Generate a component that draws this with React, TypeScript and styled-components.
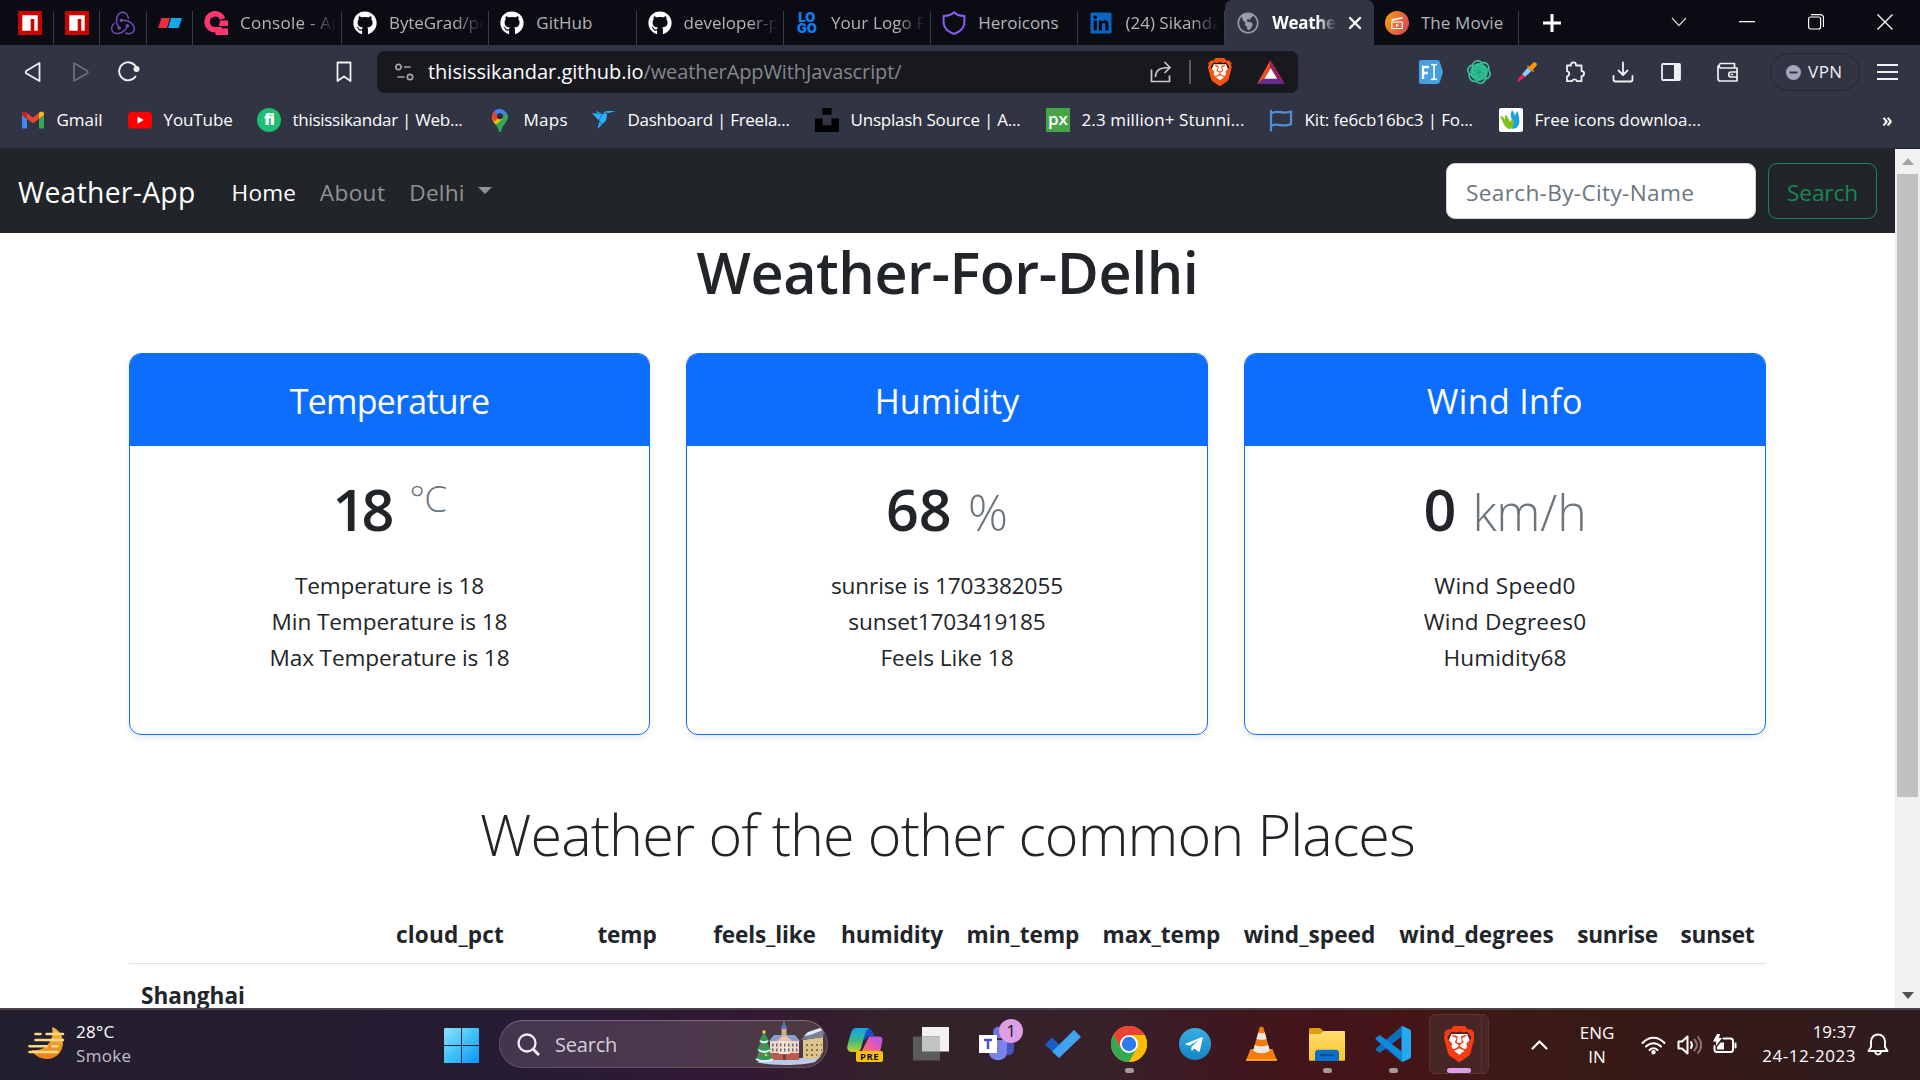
import React from "react";
import styled, { createGlobalStyle } from "styled-components";
import { FaGithub, FaLinkedin } from "react-icons/fa";
import { SiRedux, SiBrave, SiOpenai, SiFreelancer, SiUnsplash } from "react-icons/si";
import { HiGlobeAmericas } from "react-icons/hi2";

const Global = createGlobalStyle`
  *, *::before, *::after { box-sizing: border-box; }
  html, body { margin: 0; padding: 0; background: #fff; }
  body {
    width: 1920px; height: 1080px; overflow: hidden;
    font-family: "Open Sans", "Noto Sans", sans-serif;
    color: #212529;
  }
  svg { display: block; flex: none; }
`;

const T = styled.span<{ $s: number; $ls?: number; $wt?: number; $c?: string }>`
  display: inline-block;
  white-space: nowrap;
  font-size: ${(p) => p.$s}px;
  letter-spacing: ${(p) => p.$ls ?? 0}px;
  font-weight: ${(p) => p.$wt ?? 400};
  ${(p) => (p.$c ? `color: ${p.$c};` : "")}
`;

const Screen = styled.div`
  display: flex;
  flex-direction: column;
  width: 1920px;
  height: 1080px;
`;

/* ---------- tab strip ---------- */
const TabStrip = styled.div`
  display: flex;
  height: 45px;
  background: #0b0b14;
  padding-left: 7px;
`;
const PinnedTab = styled.div`
  flex: none;
  width: 46.5px;
  height: 45px;
  padding: 11px 0 0 11px;
  background: linear-gradient(#3b3b3e, #3b3b3e) right 11px / 1px 34px no-repeat;
`;
const Tab = styled.div<{ $active?: boolean; $w?: number }>`
  display: flex;
  flex: none;
  align-items: center;
  width: ${(p) => p.$w ?? 147.3}px;
  height: 45px;
  padding: 1px 6px 0 11px;
  gap: 12px;
  color: #b4b4b8;
  ${(p) =>
    p.$active
      ? "background: #313442; border-radius: 7px 7px 0 0; color: #fff; padding-right: 12px;"
      : "background: linear-gradient(#3b3b3e, #3b3b3e) right 11px / 1px 34px no-repeat;"}
`;
const Favicon = styled.div`
  display: flex;
  align-items: center;
  justify-content: center;
  width: 24px;
  height: 24px;
  flex: none;
`;
const TabTitle = styled.div<{ $fade?: boolean }>`
  flex: 1;
  min-width: 0;
  overflow: hidden;
  line-height: 26px;
  ${(p) => p.$fade && "mask-image: linear-gradient(90deg, #000 70%, transparent 100%);"}
`;
const WindowButtons = styled.div`
  display: flex;
  align-items: center;
  height: 43px;
`;
const LogoWord = styled.div`
  display: flex;
  flex-direction: column;
  align-items: center;
  font: 900 13px/11px "Inter", sans-serif;
  color: #0d7ff2;
`;

/* ---------- toolbar ---------- */
const Toolbar = styled.div`
  display: flex;
  align-items: center;
  height: 54px;
  background: #313442;
  color: #f0f0f2;
`;
const Slot = styled.div<{ $w: number; $ml?: number }>`
  display: flex;
  align-items: center;
  justify-content: center;
  width: ${(p) => p.$w}px;
  margin-left: ${(p) => p.$ml ?? 0}px;
  flex: none;
`;
const AddressBar = styled.div`
  display: flex;
  align-items: center;
  width: 921px;
  height: 42px;
  margin-left: 25px;
  border-radius: 7px;
  background: #17191f;
`;
const Url = styled.div`
  flex: 1;
  margin-left: 14px;
  line-height: 40px;
  color: #fff;
  white-space: nowrap;
`;
const Divider = styled.div`
  width: 2px;
  height: 24px;
  margin-left: 17px;
  background: #5b5d64;
`;
const Vpn = styled.div`
  display: flex;
  align-items: center;
  width: 90px;
  height: 38px;
  margin-left: 32px;
  padding-left: 15px;
  gap: 7px;
  border: 1.5px solid #232530;
  border-radius: 19px;
  line-height: 24px;
`;

/* ---------- bookmarks ---------- */
const Bookmarks = styled.div`
  display: grid;
  grid-template-columns: 107px 129px 231px 104px 223px 231px 223px 230px 383px auto;
  height: 50px;
  padding: 9px 0 0 21px;
  background: #313442;
  border-bottom: 1px solid #24262c;
  color: #fff;
`;
const Bookmark = styled.div`
  display: flex;
  align-items: center;
  height: 24px;
  gap: 11.5px;
  line-height: 24px;
`;
const FiBadge = styled.div`
  width: 24px;
  height: 24px;
  border-radius: 50%;
  background: #1dbf73;
  color: #fff;
  font: 800 16px/23px "Open Sans", sans-serif;
  text-align: center;
  letter-spacing: -1px;
`;
const PxBadge = styled.div`
  width: 24px;
  height: 24px;
  background: #47a447;
  color: #fff;
  font: 600 17px/21px "Open Sans", sans-serif;
  text-align: center;
`;

/* ---------- page ---------- */
const Viewport = styled.div`
  display: flex;
  height: 859px;
`;
const Page = styled.div`
  width: 1895px;
  height: 859px;
  overflow: hidden;
  background: #fff;
`;
const Scrollbar = styled.div`
  display: flex;
  flex-direction: column;
  align-items: center;
  width: 25px;
  height: 859px;
  background: #f1f1f1;
`;
const ScrollArrow = styled.div`
  display: flex;
  align-items: center;
  justify-content: center;
  width: 25px;
  height: 25px;
`;
const Thumb = styled.div`
  width: 21px;
  height: 623px;
  margin-bottom: auto;
  background: #c1c1c1;
`;
const Navbar = styled.nav`
  display: flex;
  align-items: center;
  height: 84px;
  padding: 0 18px;
  background: #212529;
  color: #fff;
`;
const NavLinks = styled.div`
  display: flex;
  align-items: center;
  padding-top: 2px;
`;
const NavLink = styled.a<{ $on?: boolean; $ml: number }>`
  display: flex;
  align-items: center;
  margin-left: ${(p) => p.$ml}px;
  color: ${(p) => (p.$on ? "#fff" : "#909294")};
`;
const Caret = styled.i`
  margin: -3px 0 0 13px;
  border: 7px solid transparent;
  border-top-color: currentColor;
  border-bottom: 0;
`;
const SearchField = styled.div`
  display: flex;
  align-items: center;
  width: 310px;
  height: 56px;
  margin-left: auto;
  padding: 2px 0 0 19px;
  border: 1px solid #ced4da;
  border-radius: 9px;
  background: #fff;
  color: #6c757d;
`;
const SearchButton = styled.div`
  display: flex;
  align-items: center;
  justify-content: center;
  width: 109px;
  height: 56px;
  margin-left: 12px;
  padding-top: 2px;
  border: 1px solid #198754;
  border-radius: 9px;
  color: #198754;
`;
const Heading = styled.h1`
  margin: 0;
  height: 120px;
  text-align: center;
  line-height: 78px;
  font-weight: 600;
`;
const Cards = styled.div`
  display: grid;
  grid-template-columns: 521px 522px 522px;
  gap: 36px;
  padding-left: 129px;
`;
const Card = styled.section`
  height: 382px;
  border: 1px solid #0d6efd;
  border-radius: 12px;
  box-shadow: 0 3px 6px rgba(0, 0, 0, 0.08);
  overflow: hidden;
  text-align: center;
`;
const CardHead = styled.header`
  height: 92px;
  line-height: 95px;
  background: #0d6efd;
  color: #fff;
`;
const Reading = styled.div`
  display: flex;
  justify-content: center;
  align-items: baseline;
  gap: 16px;
  height: 122px;
  padding-top: 25px;
  line-height: 76px;
`;
const Sup = styled.span`
  align-self: flex-start;
  margin-left: 3px;
  line-height: 53px;
  color: #6c757d;
`;
const Lines = styled.div`
  display: flex;
  flex-direction: column;
  align-items: center;
  line-height: 36px;
`;
const SubHeading = styled.h2`
  margin: 0;
  height: 165px;
  padding-top: 60px;
  text-align: center;
  line-height: 78px;
  font-weight: 300;
`;
const Table = styled.div`
  display: grid;
  grid-template-columns: 217px 208px 146px 129px 126px 136px 141px 155px 179px 103px 97px;
  width: 1638px;
  margin-left: 129px;
`;
const Th = styled.div`
  height: 64px;
  text-align: center;
  line-height: 70px;
  border-bottom: 1px solid #dee2e6;
`;
const RowHead = styled.div`
  height: 64px;
  padding-left: 12px;
  line-height: 63px;
`;

/* ---------- taskbar ---------- */
const Taskbar = styled.footer`
  display: flex;
  height: 72px;
  border-top: 2px solid #4a434c;
  background: linear-gradient(90deg, #241f2f 0%, #241d31 20%, #281b36 29%, #331833 39%, #33222a 46%, #34222a 52%, #38202a 58%, #40161d 65%, #451417 73%, #3b1a16 79%, #381917 86%, #2e1c1f 100%);
  color: #fff;
`;
const WeatherWidget = styled.div`
  display: flex;
  width: 444px;
  padding: 10px 0 0 28px;
  gap: 10px;
`;
const MoonBox = styled.div`
  padding-top: 5px;
`;
const Stack = styled.div<{ $align?: string }>`
  display: flex;
  flex-direction: column;
  align-items: ${(p) => p.$align ?? "flex-start"};
  line-height: 24px;
`;
const SearchPill = styled.div`
  display: flex;
  align-items: center;
  width: 329px;
  height: 48px;
  margin: 10px 4px 0 20px;
  padding-left: 17px;
  border: 1.5px solid rgba(255, 255, 255, 0.14);
  border-top-color: rgba(255, 255, 255, 0.26);
  border-radius: 24px;
  background: linear-gradient(90deg, #44354f, #4d384d 60%, #4b3a40);
  overflow: hidden;
`;
const PillText = styled.div`
  flex: 1;
  margin: 2px 0 0 15px;
  line-height: 40px;
  color: #d6cfd8;
`;
const AppSlot = styled.div`
  position: relative;
  display: flex;
  justify-content: center;
  width: 66px;
  height: 70px;
  padding-top: 16px;
`;
const Badge = styled.div`
  position: absolute;
  left: 35px;
  top: 9px;
  width: 24px;
  height: 24px;
  border-radius: 50%;
  background: #dc9fe3;
  color: #1b1020;
  font-size: 17px;
  line-height: 24px;
  text-align: center;
`;
const PreTag = styled.div`
  position: absolute;
  left: 24px;
  top: 41px;
  width: 27px;
  height: 11px;
  border-radius: 2px;
  background: #fbc00c;
  color: #111;
  font: 700 9.5px/11px "Open Sans", sans-serif;
  letter-spacing: 0.4px;
  text-align: center;
`;
const Running = styled.i<{ $active?: boolean }>`
  position: absolute;
  bottom: 7px;
  width: ${(p) => (p.$active ? 24 : 9)}px;
  height: 5px;
  border-radius: 3px;
  background: ${(p) => (p.$active ? "#dc9fe8" : "#a89a9c")};
`;
const Tile = styled.i<{ $x: number }>`
  position: absolute;
  left: ${(p) => p.$x}px;
  top: 4px;
  width: 53px;
  height: 60px;
  border-radius: 6px;
  background: #482625;
  border: 1px solid #583634;
`;
const BraveMark = styled.div`
  position: relative;
`;
const Tray = styled.div`
  display: grid;
  grid-template-columns: 50px 66px 46px 26px 46px 108px 44px;
  margin-left: 22px;
  height: 70px;
  justify-items: center;
  align-items: center;
`;
const TrayText = styled(Stack)`
  padding-bottom: 1px;
`;
const Clock = styled(Stack)`
  justify-self: end;
  padding-bottom: 3px;
`;

/* ---------- icons ---------- */
const Npm = () => (
  <svg width="24" height="24" viewBox="0 0 24 24">
    <path fill="#cc0200" d="M0 0h24v24H0z" />
    <path fill="#fff" d="M4.3 4.3h15.4v15.4h-3.4V8h-3.6v11.7H4.3z" />
  </svg>
);
const TwoFlags = () => (
  <svg width="24" height="24" viewBox="0 0 24 24">
    <path fill="#ef2c40" d="M3.5 7H12l-3 10H0z" />
    <path fill="#10a8ea" d="M13 7h11l-3.3 10H10z" />
  </svg>
);
const Appwrite = () => (
  <svg width="24" height="24" viewBox="0 0 24 24">
    <path fill="none" stroke="#fd366e" strokeWidth="5.6" d="M14 18.8H11A8 8 0 1 1 18.6 8" />
    <path fill="#fd366e" d="M16 9.500H24v5.500h-9zM11.500 17.500H24V24H11.500zM14 16h4v3h-4z" />
  </svg>
);
const Shield = () => (
  <svg width="24" height="24" viewBox="0 0 24 24" fill="none" stroke="#8b5cf6" strokeWidth="2" strokeLinejoin="round">
    <path d="M12 1.300C9.300 4 5.500 5 1.600 4.900v6.400c0 5 4.200 9.400 10.400 11.600 6.200-2.200 10.400-6.600 10.400-11.600V4.900C18.500 5 14.700 4 12 1.300z" />
  </svg>
);
const Movie = () => (
  <svg width="24" height="24" viewBox="0 0 24 24">
    <defs>
      <linearGradient id="mv" x1="0" y1="0.3" x2="1" y2="0.7">
        <stop offset="0" stopColor="#f59b0b" />
        <stop offset="1" stopColor="#e0405a" />
      </linearGradient>
    </defs>
    <circle cx="12" cy="12" r="12" fill="url(#mv)" />
    <path d="M6.800 11h10.400v6.500H6.800z" fill="none" stroke="#fff" strokeWidth="1.200" />
    <path d="M6.300 8.300 17.300 6l.5 1.500-11 2.500z" fill="#fff" />
    <path d="m11 12.600 3 1.700-3 1.700z" fill="#fff" />
  </svg>
);
const Gmail = () => (
  <svg width="24" height="24" viewBox="0 0 24 24">
    <path fill="#4285f4" d="M1 20V7l5 3.800V20.500H2z" />
    <path fill="#34a853" d="M23 20V7l-5 3.800v9.700h4z" />
    <path fill="#ea4335" d="M6 5v5.800l6 4.500 6-4.500V5l-6 4.500z" />
    <path fill="#c5221f" d="M1 7V5.800C1 3.400 3.600 2.800 5 4l1 .8v6z" />
    <path fill="#fbbc04" d="M23 7V5.800C23 3.400 20.400 2.800 19 4l-1 .8v6z" />
  </svg>
);
const YouTube = () => (
  <svg width="24" height="24" viewBox="0 0 24 24">
    <rect x="0" y="3.800" width="24" height="16.600" rx="4" fill="#f00" />
    <path d="m9.500 8.500 6.300 3.600-6.300 3.600z" fill="#fff" />
  </svg>
);
const MapsPin = () => (
  <svg width="24" height="24" viewBox="0 0 24 24">
    <path fill="#34a853" d="M20 8.500c0 6-5.500 7.500-7 15-.3 1-1.700 1-2 0-.8-3.500-2-5-3.300-6.700L17.900 4.500c1.300 1 2.100 2.500 2.100 4z" />
    <path fill="#fbbc04" d="M7.700 16.800C6 14.500 4 12.500 4 8.500l6-2 5 4z" />
    <path fill="#ea4335" d="M4 8.500c0-2 .7-3.800 1.900-5.300L12 7.500 7 13.500C5 12 4 10.500 4 8.500z" />
    <path fill="#4285f4" d="M5.900 3.200A8 8 0 0 1 18.400 5L12.500 11z" />
    <circle cx="12" cy="8.300" r="3" fill="#2b2b3a" />
  </svg>
);
const FlagOutline = () => (
  <svg width="24" height="24" viewBox="0 0 24 24" fill="none" stroke="#538dd7" strokeWidth="2.300" strokeLinejoin="round" strokeLinecap="round">
    <path d="M2 3v19.500M2 5.500c8-4.500 10 1.500 20-2v12.800c-9 3.500-12-2-20 1.500" />
  </svg>
);
const Leaf = () => (
  <svg width="24" height="24" viewBox="0 0 24 24">
    <rect width="24" height="24" rx="2" fill="#fff" />
    <path fill="#17a2e8" d="M13 2c2 3 3 4 3 7 0-2 1-4 2.500-6 .5 3 2 5 1.500 8 1 3 0 7-3 9-2 1-4 1-5 0 3-4 1-8 0-11-.5-2 0-5 1-7z" />
    <path fill="#7fc31c" d="M1 8c3 0 4 2 5 4 0-2-1-4 1-5 2 2 3 5 4 7 1-1 1-3 3-3 2 5 0 9-3 10C6 21 4 14 1 8z" />
  </svg>
);
const Bat = () => (
  <svg width="28" height="24" viewBox="0 0 28 24">
    <path fill="#ff4724" d="M13.500 0v8L7 18.500 0 24z" />
    <path fill="#9e1f63" d="M13.500 0 28 24l-7.500-5.500L13.500 8z" />
    <path fill="#662d91" d="m0 24 7-5.500h13.500L28 24z" />
    <path fill="#fff" d="m13.700 8 6.500 10.700h-13z" />
  </svg>
);
const BraveIcon = ({ size, color }: { size: number; color: string }) => (
  <svg width={size * 0.85} height={size} viewBox="0 0 30 36">
    <path fill="#fff" d="M7 8h16l3 8-4 9-7 7-7-7-4-9z" />
    <g transform="translate(-3 0) scale(1.5)">
      <SiBrave size={24} color={color} />
    </g>
  </svg>
);
const ChromeLogo = () => (
  <svg width="36" height="36" viewBox="0 0 36 36">
    <circle cx="18" cy="18" r="18" fill="#fbbc04" />
    <path fill="#ea4335" d="M2.400 9A18 18 0 0 1 33.600 9H18l-7.800 13.500z" />
    <path fill="#34a853" d="M2.400 9A18 18 0 0 0 18 36l7.800-13.500-7.800 4-7.800-4z" />
    <path fill="#fbbc04" d="M33.600 9A18 18 0 0 1 18 36l7.800-13.500V13L18 9z" />
    <circle cx="18" cy="18" r="9" fill="#fff" />
    <circle cx="18" cy="18" r="7.200" fill="#3079ef" />
  </svg>
);
const VsCode = () => (
  <svg width="36" height="36" viewBox="0 0 36 36">
    <path fill="#0b70b8" d="m.8 22.500 25.700-22v10.200L4.800 27 1 24.300c-.6-.6-.6-1.300-.2-1.800z" />
    <path fill="#0d8add" d="m.8 13.500 25.700 22V25.300L4.800 9 1 11.700c-.6.600-.6 1.300-.2 1.800z" />
    <path fill="#24a9f2" d="M26.500.3c.6-.4 1-.3 1.500 0l7 3.300c.6.300 1 .9 1 1.600v25.600c0 .7-.4 1.300-1 1.600l-7 3.300c-.5.300-1 .3-1.500-.2z" />
  </svg>
);
const Telegram = () => (
  <svg width="32" height="36" viewBox="0 0 32 36">
    <defs>
      <linearGradient id="tg" x1="0" y1="0" x2="0" y2="1">
        <stop offset="0" stopColor="#38aee2" />
        <stop offset="1" stopColor="#1784c4" />
      </linearGradient>
    </defs>
    <circle cx="16" cy="18" r="16" fill="url(#tg)" />
    <path fill="#fff" d="m6.500 17.700 16-6.500c.8-.2 1.300.2 1.100 1.200l-2.700 12.400c-.2.900-.8 1.100-1.600.6l-4-3-2 2c-.4.400-1 .2-1-.3l.2-3.400 7-6.600-9 5.600-3.800-1.200c-.7-.2-.7-.6-.2-.8z" />
  </svg>
);
const Vlc = () => (
  <svg width="31" height="36" viewBox="0 0 31 36">
    <path fill="#f47c0c" d="M4.500 23h22L31 34.500H0z" />
    <path fill="#ffae3d" d="M0 33.200h31v1.600H0z" />
    <path fill="#f47a0c" d="M13.700 1.300c.6-.6 3-.6 3.600 0L24 25c-2 3.500-15 3.500-17 0z" />
    <path fill="#e8e8e8" d="M12.300 6.500c1.500 1 5 1 6.400 0l1.800 6.200c-2 1.500-8 1.500-10 0zM8.900 18.800c3 2.200 10.200 2.200 13.200 0l1.700 6c-3 3.300-13.600 3.300-16.600 0z" />
  </svg>
);
const Folder = () => (
  <svg width="36" height="36" viewBox="0 0 36 36">
    <defs>
      <linearGradient id="fd" x1="0" y1="0" x2="0" y2="1">
        <stop offset="0" stopColor="#ffdf72" />
        <stop offset="1" stopColor="#fcc526" />
      </linearGradient>
    </defs>
    <path fill="#e09e08" d="M0 3.500C0 2.600.6 2 1.500 2H11l4 3.500V10H0z" />
    <path fill="url(#fd)" d="M0 8h11l4-3h20c.6 0 1 .4 1 1v27.500c0 .8-.4 1.300-1.200 1.300H1.200C.4 34.800 0 34.300 0 33.500z" />
    <path fill="#0a6fca" d="M6 35V27c0-2 1.500-3.200 3.500-3.200h17c2 0 3.500 1.200 3.500 3.200v8z" />
    <path stroke="#07468c" strokeWidth="1.500" d="M11 29h14" />
  </svg>
);
const Todo = () => (
  <svg width="36" height="36" viewBox="0 0 36 36">
    <path fill="#1c5cc4" d="m0 18.500 7-7 11.500 11.300L14 32z" />
    <path fill="#41a3ee" d="M29 4 36 11 14 32l-6.800-6.500z" />
  </svg>
);
const Teams = () => (
  <svg width="36" height="36" viewBox="0 0 36 36">
    <path fill="#4a53bb" d="M26 14h9v9c0 5-4 7-7 6z" />
    <circle cx="20" cy="6.500" r="6" fill="#6e74dd" />
    <path fill="#7b83eb" d="M10 14h18v12c0 11-18 11-18 0z" />
    <path fill="#fff" d="M0 9h18v18H0z" />
    <path stroke="#4b53bc" strokeWidth="2.500" fill="none" d="M5 14h8M9 14v9" />
  </svg>
);
const TaskView = () => (
  <svg width="36" height="36" viewBox="0 0 36 36">
    <path fill="#f2f2f2" d="M9 1h27v24.500H9z" />
    <path fill="#5b5b5b" d="M0 10.500h27v24H0z" />
    <path fill="#c3c3c3" d="M9 10.500h18v15H9z" />
  </svg>
);
const Copilot = () => (
  <svg width="36" height="36" viewBox="0 0 36 36">
    <defs>
      <linearGradient id="cpa" x1="0" y1="0" x2="0" y2="1">
        <stop offset="0" stopColor="#1b9df0" />
        <stop offset="0.5" stopColor="#35b98b" />
        <stop offset="1" stopColor="#c9cf1f" />
      </linearGradient>
      <linearGradient id="cpb" x1="1" y1="0" x2="0" y2="1">
        <stop offset="0" stopColor="#a060f0" />
        <stop offset="0.5" stopColor="#e455b5" />
        <stop offset="1" stopColor="#ff7a55" />
      </linearGradient>
    </defs>
    <path fill="#1550cf" d="M13 2h7c3 0 5 2 6 5l1 3h-4c-3 0-4 2-5 5z" />
    <path fill="url(#cpb)" d="M22 10.500h10c3 0 4 2 3.300 5l-2 9.500H15z" />
    <path fill="url(#cpa)" d="M9 2h13c-2 1-3 3-4 6l-4 14c-1 3-3 4-5 4H5c-4 0-5.500-3-4.500-7L4 7c1-3 2-5 5-5z" />
  </svg>
);
const WinLogo = () => (
  <svg width="35" height="35" viewBox="0 0 35 35">
    <defs>
      <linearGradient id="wn" x1="0" y1="0" x2="1" y2="1">
        <stop offset="0" stopColor="#8be2ff" />
        <stop offset="0.5" stopColor="#3ec3fb" />
        <stop offset="1" stopColor="#0f93f8" />
      </linearGradient>
    </defs>
    <path fill="url(#wn)" d="M1.500 0H17v17H0V1.500C0 .5.500 0 1.500 0zM18 0h15.500c1 0 1.500.5 1.500 1.500V17H18zM0 18h17v17H1.500C.5 35 0 34.500 0 33.500zM18 18h17v15.500c0 1-.5 1.500-1.500 1.500H18z" />
  </svg>
);
const SmokeMoon = () => (
  <svg width="38" height="36" viewBox="0 0 38 36">
    <defs>
      <linearGradient id="mn" x1="0" y1="0" x2="0" y2="1">
        <stop offset="0" stopColor="#f4bc45" />
        <stop offset="1" stopColor="#ee7d14" />
      </linearGradient>
    </defs>
    <path fill="url(#mn)" d="M24 2c7 2.500 11 8.500 11 15.500C35 27 28 34 19 34 12 34 6.500 30.500 3.500 25c4 .5 9.500 0 13.500-3 7-5 8.500-13 7-20z" />
    <g stroke="#f3da84" strokeWidth="2.600" strokeLinecap="round">
      <path d="M7.500 9h5M18.500 9H35M7.500 15H35M1.500 21.200h17M24.500 21.200h5M1.500 27h28" />
    </g>
  </svg>
);
const Town = () => (
  <svg width="72" height="46" viewBox="0 0 72 46">
    <path fill="#b9cbea" d="M2 41c10-4 18-3 30-3s30-3 34-3l-6 6c-12 4-48 4-58 0z" />
    <path fill="#f0d5c8" d="M15 20h29v19H15z" />
    <path fill="#b85c50" d="M15 32h29v7H15z" />
    <path fill="#f7e3d8" d="M24 18h11v15H24z" />
    <path fill="#8b9cc9" d="m14 20 5-6h21l5 6z" />
    <path fill="#e9c2b0" d="m22 20 7.500-7 7.500 7z" />
    <path fill="#c9b48a" d="M26.500 7h5v8h-5z" />
    <path fill="#5d74b8" d="M26 8c0-3 2-3 2.500-8h1c.5 5 2.500 5 2.500 8z" />
    <path stroke="#6a6470" strokeWidth="3" strokeDasharray="1.500 2.500" d="M17 24h26M17 29h26" />
    <path fill="#7a3b32" d="M28 34h3v5h-3z" />
    <path fill="#dcc38d" d="m48 19 20-3v14c-2 5-5 8-9 8H48z" />
    <path stroke="#8a7048" strokeWidth="2" strokeDasharray="2 3" d="M51 24h16M51 29h16M51 34h11" />
    <path fill="#7b7f96" d="m46 19 6-7 18-5-2 9z" />
    <path fill="#dfe9fb" d="m49 15 4-4 15-5v3l-13 5z" />
    <path fill="#2f9a57" d="m9 11 5 9-2 1 4 8-2 1 3 9H1l3-9-2-1 4-8-2-1z" />
    <path stroke="#e6f0fb" strokeWidth="2" d="M5 20c3 2 5 2 8 0M3.500 29c4 2.500 8 2.500 12 0M1 38c5 3 12 3 17 0" fill="none" />
    <circle cx="9" cy="11" r="1.700" fill="#ffcc3a" />
    <circle cx="8" cy="25" r="1.300" fill="#e8453c" />
    <circle cx="11" cy="34" r="1.300" fill="#f4c63a" />
    <circle cx="5" cy="34" r="1.300" fill="#e8453c" />
  </svg>
);

const ln = { fill: "none", stroke: "currentColor", strokeLinecap: "round" as const, strokeLinejoin: "round" as const };

/* ---------- data ---------- */
const tabs = [
  { icon: <Appwrite />, title: "Console - Appwrite", ls: 0.25, fade: true, w: 149 },
  { icon: <FaGithub size={24} color="#fff" />, title: "ByteGrad/portfolio", ls: -0.1, fade: true },
  { icon: <FaGithub size={24} color="#fff" />, title: "GitHub", ls: 0 },
  { icon: <FaGithub size={24} color="#fff" />, title: "developer-portfolio", ls: 0, fade: true },
  { icon: <LogoWord><span>LO</span><span>GO</span></LogoWord>, title: "Your Logo For", ls: 0.1, fade: true },
  { icon: <Shield />, title: "Heroicons", ls: 0 },
  { icon: <FaLinkedin size={24} color="#0a66c2" />, title: "(24) Sikandar", ls: 0, fade: true, w: 146.8 },
];

const bookmarks = [
  { icon: <Gmail />, title: "Gmail", ls: 0 },
  { icon: <YouTube />, title: "YouTube", ls: -0.1 },
  { icon: <FiBadge>fi</FiBadge>, title: "thisissikandar | Web...", ls: -0.28 },
  { icon: <MapsPin />, title: "Maps", ls: 0.3 },
  { icon: <SiFreelancer size={24} color="#29b2fe" />, title: "Dashboard | Freela...", ls: -0.27 },
  { icon: <SiUnsplash size={24} color="#000" />, title: "Unsplash Source | A...", ls: -0.22 },
  { icon: <PxBadge>px</PxBadge>, title: "2.3 million+ Stunni...", ls: 0.12 },
  { icon: <FlagOutline />, title: "Kit: fe6cb16bc3 | Fo...", ls: -0.13 },
  { icon: <Leaf />, title: "Free icons downloa...", ls: 0 },
];

type Line = { text: string; ls: number };
type CardInfo = { head: string; hls: number; value: string; vls: number; unit: string; uls: number; sup?: boolean; lines: Line[] };
const cards: CardInfo[] = [
  {
    head: "Temperature", hls: -0.75, value: "18", vls: -4, unit: "°C", uls: -0.8, sup: true,
    lines: [{ text: "Temperature is 18", ls: -0.2 }, { text: "Min Temperature is 18", ls: -0.1 }, { text: "Max Temperature is 18", ls: -0.14 }],
  },
  {
    head: "Humidity", hls: 0, value: "68", vls: 0, unit: "%", uls: 0,
    lines: [{ text: "sunrise is 1703382055", ls: -0.1 }, { text: "sunset1703419185", ls: -0.12 }, { text: "Feels Like 18", ls: 0 }],
  },
  {
    head: "Wind Info", hls: 0.35, value: "0", vls: 0, unit: "km/h", uls: -0.2,
    lines: [{ text: "Wind Speed0", ls: 0.28 }, { text: "Wind Degrees0", ls: 0.22 }, { text: "Humidity68", ls: 0.1 }],
  },
];

const columns = [
  { name: "cloud_pct", ls: 0.15 },
  { name: "temp", ls: -0.1 },
  { name: "feels_like", ls: -0.15 },
  { name: "humidity", ls: -0.1 },
  { name: "min_temp", ls: 0 },
  { name: "max_temp", ls: 0 },
  { name: "wind_speed", ls: 0.05 },
  { name: "wind_degrees", ls: 0.1 },
  { name: "sunrise", ls: -0.3 },
  { name: "sunset", ls: -0.25 },
];

export default function App() {
  return (
    <Screen>
      <Global />
      <TabStrip>
        <PinnedTab><Npm /></PinnedTab>
        <PinnedTab><Npm /></PinnedTab>
        <PinnedTab><SiRedux size={24} color="#764abc" /></PinnedTab>
        <PinnedTab><TwoFlags /></PinnedTab>
        {tabs.map((t, i) => (
          <Tab key={i} $w={t.w}>
            <Favicon>{t.icon}</Favicon>
            <TabTitle $fade={t.fade}><T $s={17} $ls={t.ls}>{t.title}</T></TabTitle>
          </Tab>
        ))}
        <Tab $active $w={148.6}>
          <Favicon><HiGlobeAmericas size={26} color="#9a9ca5" /></Favicon>
          <TabTitle $fade><T $s={17} $wt={700} $ls={-0.3}>Weather App</T></TabTitle>
          <svg width="14" height="14" viewBox="0 0 14 14" {...ln} strokeWidth="2.400"><path d="m2 2 10 10M12 2 2 12" /></svg>
        </Tab>
        <Tab $w={145.5}>
          <Favicon><Movie /></Favicon>
          <TabTitle><T $s={17} $ls={0.1}>The Movie</T></TabTitle>
        </Tab>
        <WindowButtons>
          <Slot $w={20} $ml={23}><svg width="18" height="20" viewBox="0 0 18 20" stroke="#fff" strokeWidth="3"><path d="M9 2v18M0 11h18" /></svg></Slot>
          <Slot $w={16} $ml={109}><svg width="16" height="10" viewBox="0 0 16 10" stroke="#ccc" strokeWidth="1.200" fill="none"><path d="m1 1 7 7.500L15 1" /></svg></Slot>
          <Slot $w={16} $ml={52}><svg width="16" height="2" viewBox="0 0 16 2"><path fill="#fff" d="M0 0h16v1.300H0z" /></svg></Slot>
          <Slot $w={16} $ml={53}><svg width="16" height="16" viewBox="0 0 16 16" stroke="#fff" strokeWidth="1.200" fill="none"><rect x="0.600" y="3" width="12" height="12" rx="2" /><path d="M3 .7h9.500a3 3 0 0 1 3 3V13" /></svg></Slot>
          <Slot $w={16} $ml={53}><svg width="16" height="16" viewBox="0 0 16 16" stroke="#fff" strokeWidth="1.300"><path d="m.5.5 15 15M15.500.5l-15 15" /></svg></Slot>
        </WindowButtons>
      </TabStrip>

      <Toolbar>
        <Slot $w={18} $ml={24}><svg width="18" height="22" viewBox="0 0 18 22" {...ln} strokeWidth="1.800"><path d="M15.500 2v18L2.500 12.500c-1-.7-1-2 0-2.700z" /></svg></Slot>
        <Slot $w={18} $ml={30}><svg width="18" height="22" viewBox="0 0 18 22" {...ln} stroke="#6c6e7a" strokeWidth="1.800"><path d="M2 2v18l13-7.500c1-.7 1-2 0-2.700z" /></svg></Slot>
        <Slot $w={22} $ml={28}><svg width="22" height="22" viewBox="0 0 22 22" {...ln} strokeWidth="1.900"><path d="M17.500 15.500A9 9 0 1 1 18.500 7" /><circle cx="18.500" cy="8" r="2" fill="currentColor" /></svg></Slot>
        <Slot $w={16} $ml={196}><svg width="16" height="22" viewBox="0 0 16 22" {...ln} strokeWidth="1.800"><path d="M1.500 1.500h13v18.500L8 15.500 1.500 20z" /></svg></Slot>
        <AddressBar>
          <Slot $w={19} $ml={18}><svg width="19" height="18" viewBox="0 0 19 18" {...ln} stroke="#a5a7ad" strokeWidth="1.700"><circle cx="3.500" cy="4" r="2.700" /><path d="M9.500 4H15M3 14h6" /><circle cx="15" cy="14" r="2.700" /></svg></Slot>
          <Url><T $s={20} $ls={-0.02}>thisissikandar.github.io</T><T $s={20} $ls={-0.1} $c="#85878c">/weatherAppWithJavascript/</T></Url>
          <Slot $w={22}><svg width="22" height="22" viewBox="0 0 22 22" {...ln} stroke="#c9cacd" strokeWidth="1.700"><path d="M1.500 9v11.500h18V15M5.500 15.500C6 9 10 6.500 20 6.500M15 1.500l5 5-5 5" /></svg></Slot>
          <Divider />
          <Slot $w={24} $ml={17}><BraveIcon size={28} color="#fb5412" /></Slot>
          <Slot $w={28} $ml={25}><Bat /></Slot>
          <Slot $w={13} />
        </AddressBar>
        <Slot $w={24} $ml={121}><svg width="24" height="24" viewBox="0 0 24 24"><path fill="#46a0e0" d="M2 0h16c2 0 2.500 1 3 2.500L24 12l-3 9.500c-.5 1.500-1 2.500-3 2.500H2c-1.300 0-2-.7-2-2V2C0 .7.700 0 2 0z" /><path stroke="#fff" strokeWidth="2.400" fill="none" d="M4 19V7h6M4 13h5" /><path stroke="#fff" strokeWidth="1.600" fill="none" d="M15 5v14M12 4.500c1.500 0 3 .5 3 1.500 0-1 1.500-1.500 3-1.500M12 19.500c1.500 0 3-.5 3-1.500 0 1 1.500 1.500 3 1.500" /></svg></Slot>
        <Slot $w={24} $ml={24}><svg width="24" height="24" viewBox="0 0 24 24"><circle cx="12" cy="12" r="9" fill="#2ab38a" /><path d="M12 6.500 16.800 9.300v5.500L12 17.500l-4.800-2.700V9.300z" fill="#25a680" /><SiOpenai size={24} color="#35c69a" /></svg></Slot>
        <Slot $w={20} $ml={26}><svg width="20" height="22" viewBox="0 0 20 20"><path fill="#ff9800" d="M10.500 5c-1-1 0-2 1-1l1 .5L16 .8c2-2 5 1 3.500 3L16 7.500l.5 1c1 1 0 2-1 1z" /><path fill="#90caf9" d="m5 12 6-6.500 3.500 3.500L8 15z" /><path fill="#e91e63" d="M5 12 8 15l-4 3-3 2-1-1 2-3z" /></svg></Slot>
        <Slot $w={22} $ml={27}><svg width="22" height="22" viewBox="0 0 22 22" {...ln} strokeWidth="1.800"><path d="M3 4.500h4V3.800a2.500 2.500 0 0 1 5 0v.7h5.500v5.500a2.600 2.600 0 0 1 0 5.200v5h-4.500a2.600 2.600 0 0 0-5 0H3v-4.700a2.700 2.700 0 0 0 0-5.300z" /></svg></Slot>
        <Slot $w={22} $ml={26}><svg width="22" height="22" viewBox="0 0 22 22" {...ln} strokeWidth="1.800"><path d="M11 1.500v12M6.500 9.500l4.500 4.500 4.500-4.500M1.500 15v3.500c0 1.200.8 2 2 2h15c1.200 0 2-.8 2-2V15" /></svg></Slot>
        <Slot $w={20} $ml={27}><svg width="20" height="18" viewBox="0 0 20 18"><rect x="1" y="1" width="18" height="16" rx="1" fill="none" stroke="#f0f0f2" strokeWidth="1.800" /><path fill="#f0f0f2" d="M13 1h6v16h-6z" /></svg></Slot>
        <Slot $w={21} $ml={36}><svg width="21" height="20" viewBox="0 0 21 20" {...ln} strokeWidth="1.700"><path d="M20 6H3.500a2.500 2.500 0 0 1 0-4.500H17.500V6M1 4v12.500c0 1.500 1 2.500 2.500 2.500H20V6" /><path d="M20 10h-6c-3 0-3 5 0 5h6M14.500 12.500h1" /></svg></Slot>
        <Vpn><svg width="15" height="15" viewBox="0 0 15 15"><circle cx="7.500" cy="7.500" r="7.500" fill="#a3a7bd" /><path fill="#313442" d="M3.500 6.500h8v2h-8z" /></svg><T $s={17} $ls={0.5}>VPN</T></Vpn>
        <Slot $w={21} $ml={17}><svg width="21" height="16" viewBox="0 0 21 16"><path stroke="#f0f0f2" strokeWidth="1.800" d="M0 1h21M0 8h21M0 15h21" /></svg></Slot>
      </Toolbar>

      <Bookmarks>
        {bookmarks.map((b) => (
          <Bookmark key={b.title}>{b.icon}<T $s={17} $ls={b.ls}>{b.title}</T></Bookmark>
        ))}
        <Bookmark><T $s={19} $wt={600}>»</T></Bookmark>
      </Bookmarks>

      <Viewport>
        <Page>
          <Navbar>
            <NavLinks>
              <T $s={28.3} $ls={0.3}>Weather-App</T>
              <NavLink $on $ml={36}><T $s={22.6} $ls={0.2}>Home</T></NavLink>
              <NavLink $ml={23.5}><T $s={22.6} $ls={0.4}>About</T></NavLink>
              <NavLink $ml={24}><T $s={22.6} $ls={0.2}>Delhi</T><Caret /></NavLink>
            </NavLinks>
            <SearchField><T $s={22.6} $ls={0.34}>Search-By-City-Name</T></SearchField>
            <SearchButton><T $s={22.6} $ls={-0.1}>Search</T></SearchButton>
          </Navbar>
          <Heading><T $s={57.5} $wt={600} $ls={-0.45}>Weather-For-Delhi</T></Heading>
          <Cards>
            {cards.map((c) => (
              <Card key={c.head}>
                <CardHead><T $s={34} $ls={c.hls}>{c.head}</T></CardHead>
                <Reading>
                  <T $s={57.5} $wt={600} $ls={c.vls}>{c.value}</T>
                  {c.sup ? (
                    <Sup><T $s={37} $wt={350} $ls={c.uls}>{c.unit}</T></Sup>
                  ) : (
                    <T $s={50} $wt={300} $c="#6c757d" $ls={c.uls}>{c.unit}</T>
                  )}
                </Reading>
                <Lines>
                  {c.lines.map((l) => <T key={l.text} $s={22.6} $ls={l.ls}>{l.text}</T>)}
                </Lines>
              </Card>
            ))}
          </Cards>
          <SubHeading><T $s={57.5} $wt={300} $ls={-0.88}>Weather of the other common Places</T></SubHeading>
          <Table>
            <Th />
            {columns.map((c) => <Th key={c.name}><T $s={22.6} $wt={700} $ls={c.ls}>{c.name}</T></Th>)}
            <RowHead><T $s={22.6} $wt={700}>Shanghai</T></RowHead>
          </Table>
        </Page>
        <Scrollbar>
          <ScrollArrow><svg width="12" height="7" viewBox="0 0 12 7"><path fill="#a3a3a3" d="m6 0 6 7H0z" /></svg></ScrollArrow>
          <Thumb />
          <ScrollArrow><svg width="12" height="7" viewBox="0 0 12 7"><path fill="#505050" d="m6 7 6-7H0z" /></svg></ScrollArrow>
        </Scrollbar>
      </Viewport>

      <Taskbar>
        <WeatherWidget>
          <MoonBox><SmokeMoon /></MoonBox>
          <Stack><T $s={17} $ls={0.3}>28°C</T><T $s={17} $c="#c3bfc6" $ls={0.35}>Smoke</T></Stack>
        </WeatherWidget>
        <Slot $w={35}><WinLogo /></Slot>
        <SearchPill>
          <svg width="23" height="23" viewBox="0 0 23 23" fill="none" stroke="#f3eef4" strokeWidth="2.300"><circle cx="10" cy="10" r="8.500" /><path strokeWidth="3" d="m16 16 6 6" /></svg>
          <PillText><T $s={20} $ls={-0.2}>Search</T></PillText>
          <Town />
        </SearchPill>
        <AppSlot><Copilot /><PreTag>PRE</PreTag></AppSlot>
        <AppSlot><TaskView /></AppSlot>
        <AppSlot><Teams /><Badge>1</Badge></AppSlot>
        <AppSlot><Todo /></AppSlot>
        <AppSlot><ChromeLogo /><Running /></AppSlot>
        <AppSlot><Telegram /></AppSlot>
        <AppSlot><Vlc /></AppSlot>
        <AppSlot><Folder /><Running /></AppSlot>
        <AppSlot><VsCode /><Running /></AppSlot>
        <AppSlot><Tile $x={10} /><Tile $x={3} /><BraveMark><BraveIcon size={36} color="#f83c12" /></BraveMark><Running $active /></AppSlot>
        <Tray>
          <svg width="17" height="10" viewBox="0 0 17 10" {...ln} strokeWidth="2.200"><path d="m1.500 8.500 7-7 7 7" /></svg>
          <TrayText $align="center"><T $s={17}>ENG</T><T $s={17}>IN</T></TrayText>
          <svg width="25" height="20" viewBox="0 0 25 20" {...ln} strokeWidth="2"><path d="M1.500 8C8 1 17 1 23.500 8M5 11.500c4.500-4.500 10.500-4.500 15 0M8.500 15c2.500-2.500 5.500-2.500 8 0" /><circle cx="12.500" cy="17.300" r="1.200" fill="currentColor" /></svg>
          <svg width="25" height="22" viewBox="0 0 25 22" {...ln} strokeWidth="2"><path d="M1.500 7.500h3.500l5.500-5v17L5 14.500H1.500zM14 8c1.300 2 1.300 4 0 6" /><path stroke="#8b7472" d="M17.500 5.500c3 3.500 3 7.500 0 11M21 3c4 5 4 11 0 16" /></svg>
          <svg width="26" height="22" viewBox="0 0 26 22" {...ln} strokeWidth="2"><path d="M11.500 4.500h7c1.500 0 2.500 1 2.500 2.500v8.500c0 1.500-1 2.500-2.500 2.500H5c-1.500 0-2.500-1-2.500-2.500V12M23.500 9.500v4" /><path fill="currentColor" stroke="none" d="M5 15.500V13l3.500-4.500H12v7zM5 0h3L7 4h3L4 12V7.500H1z" /></svg>
          <Clock $align="flex-end"><T $s={17}>19:37</T><T $s={17} $ls={0.5}>24-12-2023</T></Clock>
          <svg width="22" height="24" viewBox="0 0 22 24" {...ln} strokeWidth="1.900"><path d="M11 1.500c-4 0-7 3-7 7V14l-2.500 4h19L18 14V8.500c0-4-3-7-7-7zM8 18.500c.5 4 5.500 4 6 0" /></svg>
        </Tray>
      </Taskbar>
    </Screen>
  );
}
